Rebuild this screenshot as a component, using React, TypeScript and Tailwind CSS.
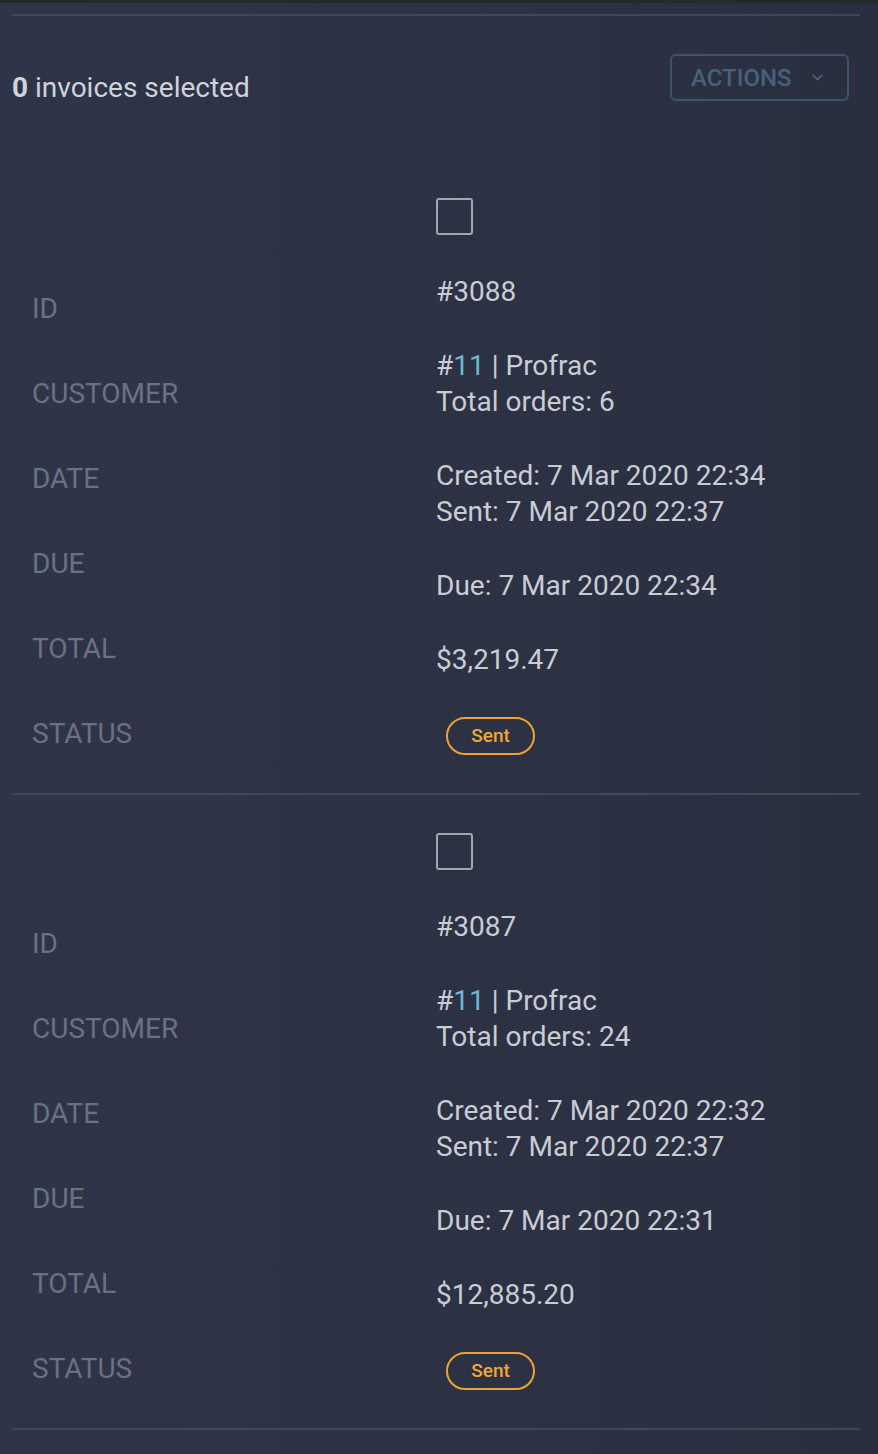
import { ChevronDown } from "lucide-react";

type Invoice = {
  id: number;
  customerId: number;
  customer: string;
  orders: number;
  created: string;
  sent: string;
  due: string;
  total: string;
  status: string;
};

const invoices: Invoice[] = [
  {
    id: 3088,
    customerId: 11,
    customer: "Profrac",
    orders: 6,
    created: "7 Mar 2020 22:34",
    sent: "7 Mar 2020 22:37",
    due: "7 Mar 2020 22:34",
    total: "$3,219.47",
    status: "Sent",
  },
  {
    id: 3087,
    customerId: 11,
    customer: "Profrac",
    orders: 24,
    created: "7 Mar 2020 22:32",
    sent: "7 Mar 2020 22:37",
    due: "7 Mar 2020 22:31",
    total: "$12,885.20",
    status: "Sent",
  },
];

const labels = ["ID", "CUSTOMER", "DATE", "DUE", "TOTAL", "STATUS"];

function Cell({ children }: { children: React.ReactNode }) {
  return <div className="py-[19px] text-[28px] leading-[36px]">{children}</div>;
}

function InvoiceCard({ invoice }: { invoice: Invoice }) {
  return (
    <div className="border-b-2 border-[#414757]">
      <div className="grid h-[633px] grid-cols-[424px_1fr]">
        {/* labels */}
        <div className="pl-[20px] pt-[106px]">
          {labels.map((l) => (
            <div
              key={l}
              className="flex h-[85px] items-center text-[28px] text-[#6b7181]"
            >
              {l}
            </div>
          ))}
        </div>

        {/* values */}
        <div className="pt-[38px] text-[#c9ccd3]">
          <div className="mb-[20px] h-[37px] w-[37px] rounded-[3px] border-2 border-[#a3a6ae]" />
          <Cell>#{invoice.id}</Cell>
          <Cell>
            <div>
              #<span className="text-[#6cb9d6]">{invoice.customerId}</span> |{" "}
              {invoice.customer}
            </div>
            <div>Total orders: {invoice.orders}</div>
          </Cell>
          <Cell>
            <div>Created: {invoice.created}</div>
            <div>Sent: {invoice.sent}</div>
          </Cell>
          <Cell>Due: {invoice.due}</Cell>
          <Cell>{invoice.total}</Cell>
          <div className="py-[20px] pl-[10px]">
            <span className="inline-flex h-[38px] w-[89px] items-center justify-center rounded-full border-2 border-[#f0a232] text-[19px] font-medium text-[#f2a636]">
              {invoice.status}
            </span>
          </div>
        </div>
      </div>
    </div>
  );
}

export default function App() {
  return (
    <div
      className="min-h-[1454px] w-full bg-gradient-to-r from-[#2f3548] to-[#2a2f40]"
      style={{ fontFamily: "Roboto, 'Liberation Sans', sans-serif" }}
    >
      <div className="h-[3px] bg-[#26282b]" />
      <div className="pl-[12px] pr-[18px]">
        <div className="mt-[11px] h-[2px] bg-[#414757]" />

        <div className="flex h-[144px] items-start justify-between">
          <div className="mt-[54px] text-[28px] leading-[36px] text-[#d0d3da]">
            <span className="font-bold">0</span> invoices selected
          </div>
          <button className="mr-[11px] mt-[38px] flex h-[47px] w-[179px] items-center gap-[17px] rounded-[6px] border-2 border-[#3b5569] pl-[19px] text-[24px] font-medium text-[#46617a]">
            ACTIONS
            <ChevronDown size={17} strokeWidth={2.5} className="text-[#46617a]" />
          </button>
        </div>

        {invoices.map((inv) => (
          <InvoiceCard key={inv.id} invoice={inv} />
        ))}
      </div>
    </div>
  );
}
